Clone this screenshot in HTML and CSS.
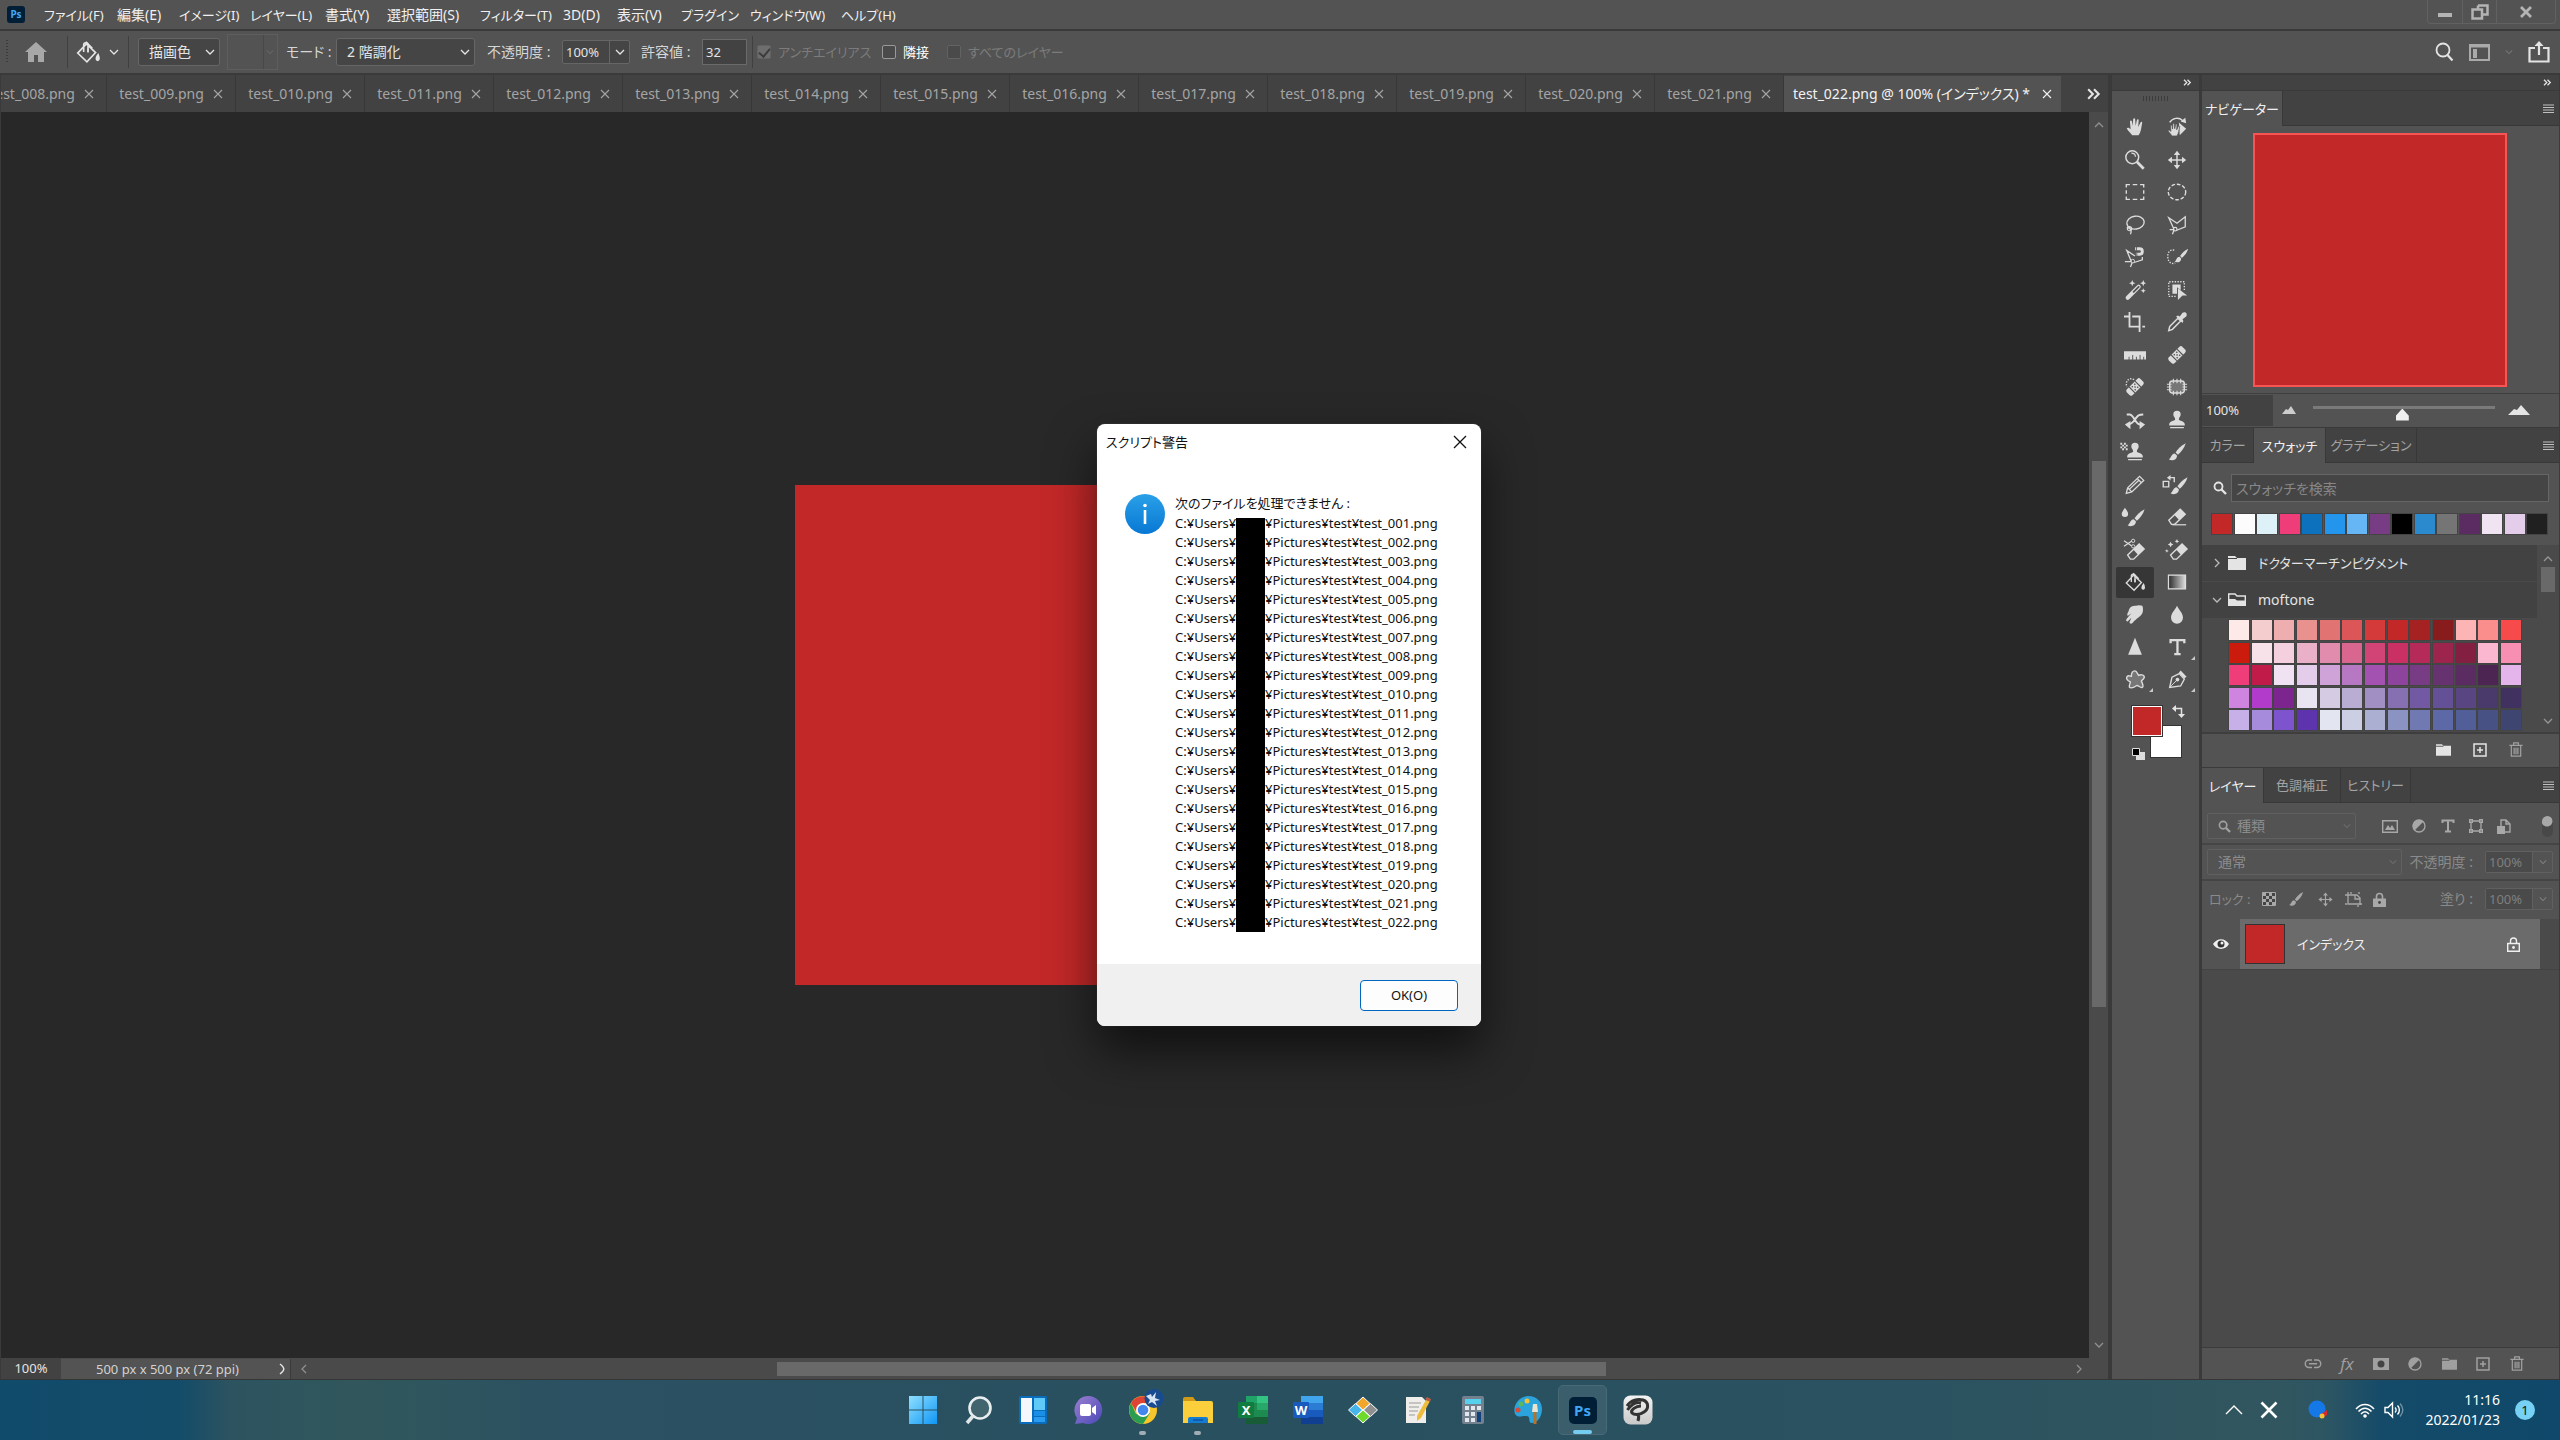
FILE: index.html
```html
<!DOCTYPE html>
<html lang="ja">
<head>
<meta charset="utf-8">
<title>test_022.png</title>
<link rel="stylesheet" href="styles.css">
</head>
<body>
<svg class="defs" aria-hidden="true">
  <symbol id="chev" viewBox="0 0 10 10"><path d="M1 3l4 4 4-4" fill="none" stroke="currentColor" stroke-width="1.3"/></symbol>
  <symbol id="x" viewBox="0 0 10 10"><path d="M1 1l8 8M9 1l-8 8" fill="none" stroke="currentColor" stroke-width="1.1"/></symbol>
  <symbol id="more" viewBox="0 0 12 10"><path d="M1 1l4 4-4 4M6 1l4 4-4 4" fill="none" stroke="currentColor" stroke-width="1.8"/></symbol>
  <symbol id="burger" viewBox="0 0 11 9"><path d="M0 1h11M0 3.5h11M0 6h11M0 8.5h11" stroke="currentColor" stroke-width="1"/></symbol>
  <symbol id="folder" viewBox="0 0 18 14"><path d="M0 0h7l2 2h9v12H0z" fill="currentColor"/><path d="M0 2.5h9" stroke="#444" stroke-width="1"/></symbol>
  <symbol id="plus" viewBox="0 0 14 14"><path d="M1 1h12v12H1zM7 4v6M4 7h6" fill="none" stroke="currentColor" stroke-width="1.5"/></symbol>
  <symbol id="trash" viewBox="0 0 14 16"><path d="M0 3.5h14M4.5 3V1h5v2M2 4v11h10V4M5 6v7M7 6v7M9 6v7" fill="none" stroke="currentColor" stroke-width="1.3"/></symbol>
  <symbol id="search" viewBox="0 0 14 14"><circle cx="5.5" cy="5.5" r="4" fill="none" stroke="currentColor" stroke-width="1.8"/><path d="M8.5 8.5l4.500 4.500" stroke="currentColor" stroke-width="2.400"/></symbol>
  <symbol id="half" viewBox="0 0 14 14"><circle cx="7" cy="7" r="6" fill="none" stroke="currentColor" stroke-width="1.3"/><path d="M11.500 2.500A6.300 6.300 0 0 0 2.500 11.500z" fill="currentColor"/></symbol>
  <symbol id="bucket" viewBox="0 0 24 24"><path d="M10.500 4.500l8.500 8-8 8.500-8.500-8zM8 12V5.500a2 2 0 0 1 4 0V12" fill="none" stroke="currentColor" stroke-width="1.5"/><path d="M10 2.500l6 6M12 9v3.500" stroke="currentColor" stroke-width="1.500"/><path d="M21.500 13c1.800 4 2 7-.5 7.500-3-.5-2.500-4 .5-7.500z" fill="currentColor"/></symbol>
  <symbol id="brush" viewBox="0 0 24 24"><path d="M21.500 2.500c-5 2.500-9 6.500-11 10l2.500 2.500c3.500-3 7-7 8.500-12.500z" fill="currentColor"/><path d="M9.500 13.500c-3.500 0-3.500 4.500-6.500 6.500 3 2 9 1 9-4.300z" fill="currentColor"/></symbol>
  <symbol id="move" viewBox="0 0 24 24"><path d="M12 5v14M5 12h14" stroke="currentColor" stroke-width="1.600"/><path d="M12 2l3.500 4.500h-7zM12 22l3.500-4.500h-7zM2 12l4.500-3.500v7zM22 12l-4.500-3.500v7z" fill="currentColor"/></symbol>
  <symbol id="hand" viewBox="0 0 24 24"><path d="M8 20c-2-3-4.500-5-5-6.500 1-1.500 3-.5 4.200 1L6.500 6c.2-1.400 1.800-1.400 2.200 0l.8 5L10 3.500c.3-1.500 2-1.500 2.200 0l.5 7 1.300-6c.5-1.300 2-1 2 .3L15.500 12l2.500-5c.7-1.200 2.200-.5 1.800.8-1 4-1 9.500-4 13.200H9z" fill="currentColor"/></symbol>
  <symbol id="band" viewBox="0 0 24 24"><g transform="rotate(-45 12 12)"><rect x="1.500" y="7.500" width="21" height="9" rx="2.500" fill="currentColor"/><path d="M7.500 7.500v9M16.500 7.500v9" stroke="#535353" stroke-width="1.200"/><path d="M9.300 9h1.500v1.500H9.300zM13.200 9h1.500v1.500h-1.500zM11.300 11.300h1.500v1.500h-1.500zM9.300 13.500h1.500V15H9.300zM13.200 13.500h1.500V15h-1.500z" fill="#535353"/></g></symbol>
  <symbol id="stamp" viewBox="0 0 24 24"><path d="M12 2a4 4 0 0 1 4 4c0 2.500-2 3-2 5.500 0 1.500 6 1.500 6.500 5V18h-17v-1.500c.5-3.500 6.500-3.500 6.500-5C10 9 8 8.500 8 6a4 4 0 0 1 4-4zM4.500 19.500h15V21h-15z" fill="currentColor"/></symbol>
  <symbol id="eraser" viewBox="0 0 24 24"><path d="M3 15.500L15.500 3.500l5.500 5.500L9.500 20H6z" fill="none" stroke="currentColor" stroke-width="1.500"/><path d="M9 9.500l6.500-6 5.500 5.500-6.500 6.500z" fill="currentColor"/></symbol>
  <symbol id="lasso3" viewBox="0 0 24 24"><path d="M8.500 16L3 4l9 6 9-7v11l-10 4M9 17l-5 0M9 17l-2 5" fill="none" stroke="currentColor" stroke-width="1.400"/><circle cx="10" cy="16.500" r="2" fill="none" stroke="currentColor" stroke-width="1.300"/></symbol>
</svg>

<div class="app">
  <header class="menubar">
    <span class="ps-badge">Ps</span>
    <nav class="menus">
      <a href="#" class="kana">ファイル(F)</a><a href="#">編集(E)</a><a href="#" class="kana">イメージ(I)</a><a href="#" class="kana">レイヤー(L)</a><a href="#">書式(Y)</a><a href="#">選択範囲(S)</a><a href="#" class="kana">フィルター(T)</a><a href="#">3D(D)</a><a href="#">表示(V)</a><a href="#" class="kana">プラグイン</a><a href="#" class="kana">ウィンドウ(W)</a><a href="#" class="kana">ヘルプ(H)</a>
    </nav>
    <div class="winctl">
      <button aria-label="最小化"><svg width="14" height="14"><path d="M0 8h14v4H0z" fill="currentColor"/></svg></button>
      <button aria-label="元に戻す"><svg width="18" height="16"><path d="M7 1.500h9.500v9H12M7 1.500V5M1.500 5.500H11v9H1.500z" fill="none" stroke="currentColor" stroke-width="2.500"/></svg></button>
      <button aria-label="閉じる"><svg width="14" height="12"><path d="M2 1l10 10M12 1L2 11" stroke="currentColor" stroke-width="2.800"/></svg></button>
    </div>
  </header>

  <div class="options">
    <span class="grip"></span>
    <button class="home" aria-label="ホーム"><svg width="22" height="20"><path d="M11 0l11 10h-3v10h-6v-7H9v7H3V10H0z" fill="currentColor"/></svg></button>
    <button class="toolpick" aria-label="塗りつぶしツール"><svg width="26" height="26"><use href="#bucket"/></svg><svg class="c" width="10" height="10"><use href="#chev"/></svg></button>
    <span class="field w-fill"><select aria-label="塗りつぶし"><option>描画色</option></select><svg width="10" height="10"><use href="#chev"/></svg></span>
    <span class="pattern"><svg width="8" height="8"><use href="#chev"/></svg></span>
    <label class="lbl l-mode" for="mode">モード :</label>
    <span class="field w-mode"><select id="mode"><option>2 階調化</option></select><svg width="10" height="10"><use href="#chev"/></svg></span>
    <label class="lbl l-op" for="op">不透明度 :</label>
    <span class="num"><input id="op" value="100%"><button aria-label="不透明度を選択"><svg width="10" height="10"><use href="#chev"/></svg></button></span>
    <label class="lbl l-tol" for="tol">許容値 :</label>
    <input class="tol" id="tol" value="32">
    <span class="checks">
      <label class="chk c1 off"><input type="checkbox" checked disabled>アンチエイリアス</label>
      <label class="chk c2"><input type="checkbox">隣接</label>
      <label class="chk c3 off"><input type="checkbox" disabled>すべてのレイヤー</label>
    </span>
    <span class="opt-right">
      <button aria-label="検索"><svg width="20" height="20" viewBox="0 0 20 20"><circle cx="9" cy="8" r="6.500" fill="none" stroke="currentColor" stroke-width="1.800"/><path d="M13.500 13l5 5.500" stroke="currentColor" stroke-width="2.200"/></svg></button>
      <button class="dim" aria-label="ワークスペース"><svg width="21" height="17"><path d="M1 1h19v15H1zM1 2.500h19" fill="none" stroke="currentColor" stroke-width="2"/><path d="M4 5h4v9H4z" fill="currentColor"/></svg></button>
      <svg class="faint" width="8" height="8"><use href="#chev"/></svg>
      <button aria-label="共有"><svg width="22" height="22"><path d="M7 7H1.500v13.500h19V7H15M11 14V3" fill="none" stroke="currentColor" stroke-width="2.200"/><path d="M11 0l4.500 5h-9z" fill="currentColor"/></svg></button>
    </span>
  </div>

  <main class="main">
    <section class="work">
      <div class="tabbar">
        <div class="tabs">
          <a href="#">test_008.png<svg width="10" height="10"><use href="#x"/></svg></a>
          <a href="#">test_009.png<svg width="10" height="10"><use href="#x"/></svg></a>
          <a href="#">test_010.png<svg width="10" height="10"><use href="#x"/></svg></a>
          <a href="#">test_011.png<svg width="10" height="10"><use href="#x"/></svg></a>
          <a href="#">test_012.png<svg width="10" height="10"><use href="#x"/></svg></a>
          <a href="#">test_013.png<svg width="10" height="10"><use href="#x"/></svg></a>
          <a href="#">test_014.png<svg width="10" height="10"><use href="#x"/></svg></a>
          <a href="#">test_015.png<svg width="10" height="10"><use href="#x"/></svg></a>
          <a href="#">test_016.png<svg width="10" height="10"><use href="#x"/></svg></a>
          <a href="#">test_017.png<svg width="10" height="10"><use href="#x"/></svg></a>
          <a href="#">test_018.png<svg width="10" height="10"><use href="#x"/></svg></a>
          <a href="#">test_019.png<svg width="10" height="10"><use href="#x"/></svg></a>
          <a href="#">test_020.png<svg width="10" height="10"><use href="#x"/></svg></a>
          <a href="#">test_021.png<svg width="10" height="10"><use href="#x"/></svg></a>
          <a href="#" class="on">test_022.png @ 100% (インデックス) *<svg width="10" height="10"><use href="#x"/></svg></a>
        </div>
        <button class="tabmore" aria-label="他のタブ"><svg width="14" height="12"><use href="#more"/></svg></button>
      </div>
      <div class="stage">
        <div class="canvas"><div class="doc"></div></div>
        <div class="vbar"><svg class="up" width="10" height="10"><use href="#chev"/></svg><span class="above"></span><span class="thumb"></span><span class="below"></span><svg width="10" height="10"><use href="#chev"/></svg></div>
      </div>
      <div class="status">
        <span class="zoomval">100%</span>
        <span class="info">500 px x 500 px (72 ppi)</span>
        <button class="next" aria-label="情報"><svg width="6" height="12"><path d="M1 1c5 4 5 6 0 10" fill="none" stroke="currentColor" stroke-width="1.500"/></svg></button>
        <div class="hbar"><svg class="lf" width="10" height="10"><use href="#chev"/></svg><span class="before"></span><span class="thumb"></span><span class="after"></span><svg class="rt" width="10" height="10"><use href="#chev"/></svg></div>
      </div>
    </section>

    <aside class="tools">
      <div class="dockhead"><svg width="9" height="7"><use href="#more"/></svg></div>
      <div class="toolbody">
        <span class="hgrip"></span>
        <div class="toolgrid">
          <button aria-label="手のひら"><svg viewBox="0 0 24 24"><use href="#hand"/></svg></button>
          <button aria-label="回転ビュー"><svg viewBox="0 0 24 24"><path d="M4 7c3-5 10-6 14-2" fill="none" stroke="currentColor" stroke-width="1.500"/><path d="M16 6l5-4 1 6zM14 7l8 7-7 7z" fill="currentColor"/><g transform="translate(0 6) scale(.75)" stroke="#535353" stroke-width="1"><use href="#hand"/></g></svg></button>
          <button aria-label="ズーム"><svg viewBox="0 0 24 24"><circle cx="9" cy="9" r="7" fill="none" stroke="currentColor" stroke-width="1.600"/><path d="M8 4.500c2.500 0 4.500 1.500 4.500 4" fill="none" stroke="currentColor" stroke-width="1.300"/><path d="M14 14l7.500 7.500" stroke="currentColor" stroke-width="3"/></svg></button>
          <button aria-label="移動"><svg viewBox="0 0 24 24"><use href="#move"/></svg></button>
          <button aria-label="長方形選択"><svg viewBox="0 0 24 24"><path d="M2.500 7V4h4M9.500 4h5M17.500 4h4v3M21.500 10v4M21.500 17v3h-4M14.500 20h-5M6.500 20h-4v-3M2.500 14v-4" fill="none" stroke="currentColor" stroke-width="1.500"/></svg></button>
          <button aria-label="楕円形選択"><svg viewBox="0 0 24 24"><ellipse cx="12" cy="12" rx="9.500" ry="8.500" fill="none" stroke="currentColor" stroke-width="1.500" stroke-dasharray="4 2"/></svg></button>
          <button aria-label="なげなわ"><svg viewBox="0 0 24 24"><ellipse cx="12.500" cy="9.500" rx="9.500" ry="7" transform="rotate(-8 12 9)" fill="none" stroke="currentColor" stroke-width="1.500"/><circle cx="6" cy="16" r="2.300" fill="none" stroke="currentColor" stroke-width="1.300"/><path d="M3 15c4 0 6 3 4 7" fill="none" stroke="currentColor" stroke-width="1.300"/></svg></button>
          <button aria-label="多角形選択"><svg viewBox="0 0 24 24"><use href="#lasso3"/></svg></button>
          <button aria-label="マグネット選択"><svg viewBox="0 0 24 24"><path d="M8 17L3 5l9 6M20 12v3l-9 3M8 17H1M9 18l-2 5" fill="none" stroke="currentColor" stroke-width="1.400"/><circle cx="9.500" cy="16.500" r="2" fill="none" stroke="currentColor"/><path d="M12 3h5c4 0 4 6 0 6h-4" fill="none" stroke="currentColor" stroke-width="3.200"/><path d="M13.500 1v4M14 7v4" stroke="#535353"/></svg></button>
          <button aria-label="クイック選択"><svg viewBox="0 0 24 24"><path d="M9 4.500c-5-1-7.500 3-7 8s4 8 8 6" fill="none" stroke="currentColor" stroke-width="1.500" stroke-dasharray="1.500 1.500"/><g transform="translate(7 1) scale(.8)"><use href="#brush"/></g></svg></button>
          <button aria-label="自動選択"><svg viewBox="0 0 24 24"><path d="M4 20.500L16 8.500" stroke="currentColor" stroke-width="4.500" stroke-linecap="round"/><path d="M10.500 14L16 8.500" stroke="#535353" stroke-width="2" stroke-linecap="round"/><path d="M9 1l1 2.500 2.500 1-2.500 1L9 8 8 5.500l-2.500-1L8 3.500zM21 1l1 2.500 2 1-2 1L21 8l-1-2.500-2.500-1 2.500-1zM21 10l.8 2 2 .8-2 .8-.8 2-.8-2-2-.8 2-.8z" fill="currentColor"/></svg></button>
          <button aria-label="オブジェクト選択"><svg viewBox="0 0 24 24"><path d="M20 12V3H3v16h9" fill="none" stroke="currentColor" stroke-width="1.500" stroke-dasharray="1.500 1.500"/><path d="M7 6h9v6l-4-3v7H7zM13 10l10 8h-5l-5 5z" fill="currentColor"/></svg></button>
          <button aria-label="切り抜き"><svg viewBox="0 0 24 24"><path d="M0 6h5M6 1v16h11M20 17h3M9 6h8v17" fill="none" stroke="currentColor" stroke-width="2"/></svg></button>
          <button aria-label="スポイト"><svg viewBox="0 0 24 24"><path d="M4 17l9-9 3 3-9 9-4 1.500z" fill="none" stroke="currentColor" stroke-width="1.600"/><path d="M11 6l2-1 2 1 3-4c3-2 6 1 4 4l-4 3 1 2-1 2z" fill="currentColor"/></svg></button>
          <button aria-label="ものさし"><svg viewBox="0 0 24 24"><path d="M0 8h24v9h-2v-3h-1v3h-3v-5h-1v5h-3v-3h-1v3h-3v-5H9v5H6v-3H5v3H0z" fill="currentColor"/></svg></button>
          <button aria-label="修復ブラシ"><svg viewBox="0 0 24 24"><use href="#band"/></svg></button>
          <button aria-label="スポット修復"><svg viewBox="0 0 24 24"><path d="M11 4C6 1 1 5 3 12" fill="none" stroke="currentColor" stroke-width="1.500" stroke-dasharray="1.500 1.500"/><use href="#band"/></svg></button>
          <button aria-label="パッチ"><svg viewBox="0 0 24 24"><rect x="4" y="5.500" width="16" height="13" rx="3" fill="#777" stroke="currentColor" stroke-width="1.500"/><path d="M8 3v5M12 3v5M16 3v5M8 16v5M12 16v5M16 16v5M1 9h5M1 12h5M1 15h5M18 9h5M18 12h5M18 15h5" stroke="currentColor" stroke-width="1.200"/></svg></button>
          <button aria-label="コンテンツに応じた移動"><svg viewBox="0 0 24 24"><path d="M3 6h3c5 0 6 11 12 11M3 17c6 0 8-4 10-7s3-4 8-4" fill="none" stroke="currentColor" stroke-width="2.200"/><path d="M17 13l6 4-6 5zM7 13l-6 4 6 5z" fill="currentColor"/></svg></button>
          <button aria-label="スタンプ"><svg viewBox="0 0 24 24"><use href="#stamp"/></svg></button>
          <button aria-label="パターンスタンプ"><svg viewBox="0 0 24 24"><use href="#stamp"/><path d="M-4 2h2v2h-2zM0 2h2v2H0zM-2 4h2v2h-2zM2 4h2v2H2zM-4 6h2v2h-2zM0 6h2v2H0zM-2 8h2v2h-2zM2 8h2v2H2z" fill="currentColor"/></svg></button>
          <button aria-label="ブラシ"><svg viewBox="0 0 24 24"><use href="#brush"/></svg></button>
          <button aria-label="鉛筆"><svg viewBox="0 0 24 24"><path d="M2.500 21l1.500-6L17 2.500 21.500 7 8.500 19.500zM4 15l4.500 4.500M14.500 5l4.500 4.500M6 16.500L16.500 6.500" fill="none" stroke="currentColor" stroke-width="1.400"/></svg></button>
          <button aria-label="ヒストリーブラシ"><svg viewBox="0 0 24 24"><g transform="translate(2 1)"><use href="#brush"/></g><path d="M-3 8h6v6h-6zM4 4h5v5" fill="none" stroke="currentColor" stroke-width="1.500"/><path d="M5 1v6L1 4z" fill="currentColor"/></svg></button>
          <button aria-label="混合ブラシ"><svg viewBox="0 0 24 24"><g transform="translate(1 1)"><use href="#brush"/></g><path d="M1 2c2.500 3.500 3.500 5 3.500 6.500a3.500 3.500 0 0 1-7 0C-2.500 7-1 5 1 2z" fill="currentColor"/></svg></button>
          <button aria-label="消しゴム"><svg viewBox="0 0 24 24"><use href="#eraser"/><path d="M7 20.500h15" stroke="currentColor" stroke-width="1.300"/></svg></button>
          <button aria-label="背景消しゴム"><svg viewBox="0 0 24 24"><g transform="translate(1 2)"><use href="#eraser"/></g><path d="M0 2l9 6M0 8l9-6" stroke="currentColor" stroke-width="1.300"/><circle cx="10" cy="2" r="1.800" fill="#535353" stroke="currentColor"/><circle cx="10" cy="8" r="1.800" fill="#535353" stroke="currentColor"/></svg></button>
          <button aria-label="マジック消しゴム"><svg viewBox="0 0 24 24"><g transform="translate(2 2)"><use href="#eraser"/></g><path d="M5 3l1 2 2 1-2 1-1 2-1-2-2-1 2-1zM12 0l.8 1.800 1.800.8-1.800.8L12 5l-.8-1.800-1.800-.8 1.800-.8zM1 11l.6 1.500 1.500.6-1.500.6L1 15l-.6-1.500-1.500-.6 1.500-.6z" fill="currentColor"/></svg></button>
          <button class="sel" aria-label="塗りつぶし"><svg viewBox="0 0 24 24"><use href="#bucket"/></svg></button>
          <button aria-label="グラデーション"><svg viewBox="0 0 24 24"><defs><linearGradient id="gr"><stop stop-color="#2a2a2a"/><stop offset="1" stop-color="#ddd"/></linearGradient></defs><rect x="2.700" y="4.500" width="18.600" height="15" fill="url(#gr)" stroke="currentColor" stroke-width="1.400"/></svg></button>
          <button aria-label="指先"><svg viewBox="0 0 24 24"><path d="M5 8c1-5 4-6 8-6 2-1 5-1 7 0 1 2 1 6 0 8-2 4-7 6-10 10-1 2-4 2-4 0l2-5-4 4c-2 0-2-2-1-3l5-6-4 3c-1-2 0-3 1-5z" fill="currentColor"/></svg></button>
          <button aria-label="ぼかし"><svg viewBox="0 0 24 24"><path d="M12 2c3 6 6.500 8 6.500 13a6.500 6.500 0 0 1-13 0C5.500 10 9 8 12 2z" fill="currentColor"/></svg></button>
          <button aria-label="シャープ"><svg viewBox="0 0 24 24"><path d="M12 2l7.500 18.500h-15z" fill="currentColor"/></svg></button>
          <button class="sub" aria-label="文字"><svg viewBox="0 0 24 24"><path d="M5 8V4.500h15V8M12.500 4.500v15M9 19.700h7" fill="none" stroke="currentColor" stroke-width="2.500"/></svg></button>
          <button class="sub" aria-label="シェイプ"><svg viewBox="0 0 24 24"><path d="M8 8c0-5 2-6 4-6s3 4 4 5c2-1 5-1 6 1s-2 4-3 5c1 3 3 6 1 7s-4-2-6-2c-3 2-6 4-8 2-1-2 1-4 1-6-2-1-5-2-4-5s4-1 5-1z" fill="#777" stroke="currentColor" stroke-width="1.500"/></svg></button>
          <button class="sub" aria-label="ペン"><svg viewBox="0 0 24 24"><path d="M4 20l2.500-11 8-4 5.500 6-4 7.500z" fill="none" stroke="currentColor" stroke-width="1.500"/><path d="M4 20l8-8" stroke="currentColor"/><circle cx="12.500" cy="11.500" r="2" fill="currentColor"/><path d="M14 4l2-2.500 6.500 7L20 10z" fill="currentColor"/></svg></button>
        </div>
        <div class="colors">
          <span class="bgc"></span><span class="fgc"></span>
          <svg class="swap" width="13" height="13"><path d="M2 3.500h7.500V11" fill="none" stroke="currentColor" stroke-width="1.500"/><path d="M0 3.500L4 0v7zM9.500 13L6 9h7z" fill="currentColor"/></svg>
          <svg class="dflt" width="13" height="12"><path d="M4 4h9v8H4z" fill="#ddd"/><path d="M.5.5h7v7h-7z" fill="#000" stroke="#ddd"/></svg>
        </div>
      </div>
    </aside>

    <aside class="dock">
      <div class="dockhead"><svg width="9" height="7"><use href="#more"/></svg></div>

      <section class="panel nav">
        <div class="ptabs"><a href="#" class="on t80">ナビゲーター</a><svg class="burger" width="11" height="9"><use href="#burger"/></svg></div>
        <div class="preview"><div class="thumbimg"></div></div>
        <div class="zoomrow">
          <input class="zin" aria-label="ズーム率" value="100%">
          <svg class="m1" width="14" height="8"><path d="M0 8l4-5 2 1 3-4 5 8z" fill="currentColor"/></svg>
          <input type="range" aria-label="ズーム" min="0" max="100" value="49">
          <svg class="m2" width="22" height="10"><path d="M0 10l6-6 3 1 4-5 9 10z" fill="currentColor"/></svg>
        </div>
      </section>

      <section class="panel swatches">
        <div class="ptabs"><a href="#" class="t52">カラー</a><a href="#" class="on t71">スウォッチ</a><a href="#" class="t91">グラデーション</a><svg class="burger" width="11" height="9"><use href="#burger"/></svg></div>
        <div class="ssearch"><svg width="14" height="14"><use href="#search"/></svg><input aria-label="スウォッチを検索" placeholder="スウォッチを検索"></div>
        <div class="recent">
          <i style="background:#c22828"></i><i style="background:#fcfcfc"></i><i style="background:#dff1f8"></i><i style="background:#ee3d78"></i><i style="background:#0d71be"></i><i style="background:#2395ec"></i><i style="background:#66b5f4"></i><i style="background:#773c84"></i><i style="background:#000"></i><i style="background:#2b89cd"></i><i style="background:#757575"></i><i style="background:#5b2c62"></i><i style="background:#f0e4f3"></i><i style="background:#e4cdea"></i><i style="background:#202020"></i>
        </div>
        <div class="slist">
          <div class="sgroups">
            <div class="grp"><svg class="arr r" width="10" height="10"><use href="#chev"/></svg><svg width="18" height="14"><use href="#folder"/></svg><span>ドクターマーチンピグメント</span></div>
            <div class="grp"><svg class="arr" width="10" height="10"><use href="#chev"/></svg><svg width="18" height="14"><path d="M.7 12V1H7l2 2h8.300v9z" fill="none" stroke="currentColor" stroke-width="1.400"/><path d="M1 6h6l2 1.500h9V13H0z" fill="currentColor"/></svg><span class="lat">moftone</span></div>
            <div class="sgrid">
              <i style="background:#fce9e8"></i><i style="background:#f4cecf"></i><i style="background:#eeadae"></i><i style="background:#e8918f"></i><i style="background:#e17473"></i><i style="background:#dc5658"></i><i style="background:#d33a39"></i><i style="background:#c22828"></i><i style="background:#a52223"></i><i style="background:#881b1c"></i><i style="background:#fcb4b5"></i><i style="background:#fa8e8c"></i><i style="background:#f74b4b"></i>
              <i style="background:#cb1b0c"></i><i style="background:#f8e2ea"></i><i style="background:#f4cfdd"></i><i style="background:#eab0c7"></i><i style="background:#e18cac"></i><i style="background:#d9668f"></i><i style="background:#d24475"></i><i style="background:#cb3064"></i><i style="background:#b62a59"></i><i style="background:#9d244c"></i><i style="background:#831f40"></i><i style="background:#fab7cf"></i><i style="background:#f68fb2"></i>
              <i style="background:#ee3d78"></i><i style="background:#c01b49"></i><i style="background:#f0e2f3"></i><i style="background:#e4cdea"></i><i style="background:#cfa3d7"></i><i style="background:#b677c3"></i><i style="background:#a352b2"></i><i style="background:#8e449c"></i><i style="background:#773c84"></i><i style="background:#663270"></i><i style="background:#5b2c62"></i><i style="background:#4d2553"></i><i style="background:#e4b5eb"></i>
              <i style="background:#cf84df"></i><i style="background:#b23bcc"></i><i style="background:#7d258e"></i><i style="background:#e8e4f2"></i><i style="background:#d5cce4"></i><i style="background:#b9add3"></i><i style="background:#a18fc3"></i><i style="background:#8670b1"></i><i style="background:#7358a4"></i><i style="background:#645096"></i><i style="background:#594581"></i><i style="background:#4a3a6b"></i><i style="background:#403160"></i>
              <i style="background:#c6b0e7"></i><i style="background:#a68adc"></i><i style="background:#7d54cd"></i><i style="background:#5d34ad"></i><i style="background:#e3e5f0"></i><i style="background:#cccfe3"></i><i style="background:#abb0d3"></i><i style="background:#8b93c2"></i><i style="background:#7079b1"></i><i style="background:#5d68a7"></i><i style="background:#515e98"></i><i style="background:#475183"></i><i style="background:#3d4570"></i>
            </div>
          </div>
          <div class="sbar"><svg class="up" width="10" height="10"><use href="#chev"/></svg><span class="thumb"></span><svg class="dn" width="10" height="10"><use href="#chev"/></svg></div>
        </div>
        <div class="sfoot"><svg width="15" height="12"><use href="#folder"/></svg><svg width="14" height="14"><use href="#plus"/></svg><svg class="mut" width="14" height="15"><use href="#trash"/></svg></div>
      </section>

      <section class="panel layers">
        <div class="ptabs"><a href="#" class="on t62">レイヤー</a><a href="#" class="t76">色調補正</a><a href="#" class="t70">ヒストリー</a><svg class="burger" width="11" height="9"><use href="#burger"/></svg></div>
        <div class="lrow filt">
          <span class="dd kind"><svg class="mag" width="13" height="13"><use href="#search"/></svg><select aria-label="フィルターの種類" disabled><option>種類</option></select><svg width="8" height="8"><use href="#chev"/></svg></span>
          <span class="ficons">
            <svg width="16" height="13"><path d="M.7.7h14.600v11.600H.7z" fill="none" stroke="currentColor" stroke-width="1.400"/><path d="M3 10l3-5 2 3 2-3 3 5z" fill="currentColor"/></svg>
            <svg width="14" height="14"><use href="#half"/></svg>
            <svg width="14" height="14"><path d="M1.500 4V1.500h11V4M7 1v11.500M4 12.500h6" fill="none" stroke="currentColor" stroke-width="2"/></svg>
            <svg width="14" height="14"><path d="M2 2h10v10H2z" fill="none" stroke="currentColor" stroke-width="1.300"/><path d="M0 0h4v4H0zM10 0h4v4h-4zM0 10h4v4H0zM10 10h4v4h-4z" fill="currentColor"/><path d="M1.500 1.500h1v1h-1zM11.500 1.500h1v1h-1zM1.500 11.500h1v1h-1zM11.500 11.500h1v1h-1z" fill="#444"/></svg>
            <svg width="14" height="15"><path d="M4 7V1h5l4 4v8H8M9 1v4h4" fill="none" stroke="currentColor" stroke-width="1.400"/><path d="M0 7h8v8H0z" fill="currentColor"/></svg>
          </span>
          <span class="tog"></span>
        </div>
        <div class="lrow">
          <span class="dd blend"><select aria-label="描画モード" disabled><option>通常</option></select><svg width="8" height="8"><use href="#chev"/></svg></span>
          <label for="lop">不透明度 :</label>
          <span class="num off"><input id="lop" value="100%" disabled><button disabled aria-label="不透明度"><svg width="8" height="8"><use href="#chev"/></svg></button></span>
        </div>
        <div class="lrow lock">
          <span class="locklbl">ロック :</span>
          <span class="licons">
            <svg width="14" height="14"><path d="M.5.500h13v13H.500z" fill="#444" stroke="currentColor"/><path d="M1 1h3v3H1zM7 1h3v3H7zM4 4h3v3H4zM10 4h3v3h-3zM1 7h3v3H1zM7 7h3v3H7zM4 10h3v3H4zM10 10h3v3h-3z" fill="currentColor"/></svg>
            <svg width="18" height="18" viewBox="0 0 24 24"><use href="#brush"/></svg>
            <svg width="17" height="17" viewBox="0 0 24 24"><use href="#move"/></svg>
            <svg width="17" height="15"><path d="M0 3h12l3 3v7M3 0v12h14M6 0v2M14 0v2M0 12h2M13 15v-2M10 3v4h5" fill="none" stroke="currentColor" stroke-width="1.300"/></svg>
            <svg width="13" height="15"><path d="M3.500 7V4.500a3 3 0 0 1 6 0V7" fill="none" stroke="currentColor" stroke-width="1.600"/><path d="M0 6.500h13V15H0z" fill="currentColor"/><circle cx="6.500" cy="10.500" r="1.400" fill="#444"/></svg>
          </span>
          <label for="lfill">塗り :</label>
          <span class="num off"><input id="lfill" value="100%" disabled><button disabled aria-label="塗り"><svg width="8" height="8"><use href="#chev"/></svg></button></span>
        </div>
        <div class="llist">
          <div class="layer">
            <span class="eye"><svg width="16" height="10"><path d="M0 5c4-6.500 12-6.500 16 0-4 6.500-12 6.500-16 0z" fill="currentColor"/><circle cx="8" cy="5" r="3.500" fill="#333"/><circle cx="9" cy="4" r="1.500" fill="currentColor"/></svg></span>
            <div class="lsel"><span class="lthumb"></span><span class="lname">インデックス</span><svg width="13" height="15"><path d="M3.500 7V4a3 3 0 0 1 6 0v3M.7 6.500h11.600v7.800H.7z" fill="none" stroke="currentColor" stroke-width="1.400"/><circle cx="6.500" cy="10.500" r="1.400" fill="currentColor"/></svg></div>
          </div>
        </div>
        <div class="lfoot">
          <svg width="18" height="10"><path d="M8 8.500H5a3.700 3.700 0 0 1 0-7.500h3M10 1h3a3.700 3.700 0 0 1 0 7.500h-3M5 4.800h8" fill="none" stroke="currentColor" stroke-width="1.400"/></svg>
          <span class="fx">fx</span>
          <svg width="16" height="12"><path d="M0 0h16v12H0z" fill="currentColor"/><circle cx="8" cy="6" r="3.500" fill="#444"/></svg>
          <svg width="14" height="14"><use href="#half"/></svg>
          <svg width="15" height="12"><use href="#folder"/></svg>
          <svg width="14" height="14"><use href="#plus"/></svg>
          <svg width="14" height="15"><use href="#trash"/></svg>
        </div>
      </section>
    </aside>
  </main>

  <footer class="taskbar">
    <span class="tray-space"></span>
    <nav class="apps">
      <button aria-label="スタート"><svg width="30" height="30"><defs><linearGradient id="w" x2="1" y2="1"><stop stop-color="#8fe0ff"/><stop offset="1" stop-color="#0f96f5"/></linearGradient></defs><path d="M1 1h13.500v13.500H1zM15.500 1H29v13.500H15.500zM1 15.500h13.500V29H1zM15.500 15.500H29V29H15.500z" fill="url(#w)"/></svg></button>
      <button aria-label="検索"><svg width="28" height="30"><circle cx="16" cy="13" r="10.500" fill="#41646f" stroke="#e8eef0" stroke-width="2.600"/><path d="M9 21l-6 7" stroke="#dfe6e8" stroke-width="3.500"/></svg></button>
      <button aria-label="ウィジェット"><svg width="30" height="30"><rect x="1" y="1" width="28" height="28" rx="2" fill="#0a6cbd"/><path d="M3 3h11v24H3z" fill="#f4f7fb"/><path d="M16 3h11v12H16z" fill="#5fc9f8"/><path d="M16 16h11v5H16z" fill="#1b8fe6"/><path d="M16 22h11v5H16z" fill="#2a9cf0"/></svg></button>
      <button aria-label="チャット"><svg width="30" height="30"><defs><linearGradient id="ch" x2="1" y2="1"><stop stop-color="#9b7fd0"/><stop offset="1" stop-color="#4a49b8"/></linearGradient></defs><path d="M15 1a14 14 0 1 1-5 27l-8 1 2-6A14 14 0 0 1 15 1z" fill="url(#ch)"/><rect x="7" y="9" width="11" height="12" rx="2" fill="#fff"/><path d="M19 13l4-3v10l-4-3z" fill="#fff"/></svg></button>
      <button class="run" aria-label="Chrome"><svg width="30" height="30" viewBox="0 6 30 30"><circle cx="15" cy="21" r="14" fill="#f6c62a"/><path d="M3 14A14 14 0 0 1 27 14H15l-6 10z" fill="#df4334"/><path d="M3 14a14 14 0 0 0 12 21l7-11-14 1z" fill="#2b9d50"/><circle cx="15" cy="21" r="7" fill="#fff"/><circle cx="15" cy="21" r="5.300" fill="#4286ee"/><circle cx="26" cy="9.500" r="9.500" fill="#184a90"/><path d="M18 7l5-2 1 3 4-5-1 6 5 2-5 1 2 5-5-4-4 2 2-4z" fill="#d5e3f3"/></svg></button>
      <button class="run" aria-label="エクスプローラー"><svg width="32" height="28"><path d="M1 3a2 2 0 0 1 2-2h8l3 4h-13z" fill="#d09a16"/><path d="M1 5h28a2 2 0 0 1 2 2v20H1z" fill="#fbcf3c"/><path d="M6 27v-4a2 2 0 0 1 2-2h16a2 2 0 0 1 2 2v4z" fill="#147cd2"/><path d="M11 24h10" stroke="#0b559c" stroke-width="1.500"/></svg></button>
      <button aria-label="Excel"><svg width="30" height="28"><path d="M8 0h22v28H8z" fill="#1d8a50"/><path d="M8 0h11v7H8z" fill="#20a366"/><path d="M19 0h11v7H19z" fill="#33c481"/><path d="M19 7h11v7H19z" fill="#27a868"/><path d="M8 21h22v7H8z" fill="#185c37"/><rect y="6" width="16" height="16" rx="1" fill="#107c41"/><text x="8" y="19" class="glyph">X</text></svg></button>
      <button aria-label="Word"><svg width="30" height="28"><path d="M8 0h22v7H8z" fill="#41a5ee"/><path d="M8 7h22v7H8z" fill="#2b7cd3"/><path d="M8 14h22v7H8z" fill="#185abd"/><path d="M8 21h22v7H8z" fill="#103f91"/><rect y="6" width="16" height="16" rx="1" fill="#185abd"/><text x="8" y="19" class="glyph">W</text></svg></button>
      <button aria-label="ランチャー"><svg width="30" height="26"><path d="M15 0l7 6.500-7 6.500-7-6.500z" fill="#f2a72c" stroke="#fff"/><path d="M7.500 6.500l7 6.500-7 6.500-7-6.500z" fill="#45b5ea" stroke="#fff"/><path d="M22.500 6.500l7 6.500-7 6.500-7-6.500z" fill="#8f8f8f" stroke="#fff"/><path d="M15 13l7 6.500-7 6.500-7-6.500z" fill="#6edb2c" stroke="#fff"/></svg></button>
      <button aria-label="メモ"><svg width="26" height="28"><path d="M1 1h16l4 4v22H1z" fill="#f0eeea"/><path d="M4 7h12M4 11h10M4 15h9M4 19h6" stroke="#999" stroke-width="1"/><path d="M21 4l4 1-9 17-4 3v-5z" fill="#eebb3b"/><path d="M20 3l2-2 4 2-1 3z" fill="#b95a45"/></svg></button>
      <button aria-label="電卓"><svg width="24" height="30"><rect x="1" y="1" width="22" height="28" rx="2" fill="#73808e"/><path d="M4 4h16v5H4z" fill="#56d0ed"/><path d="M4 11h4v4H4zM10 11h4v4h-4zM16 11h4v4h-4zM4 17h4v4H4zM10 17h4v4h-4zM4 23h4v4H4zM10 23h4v4h-4z" fill="#e1e7ed"/><path d="M16 17h4v10h-4z" fill="#12427b"/></svg></button>
      <button aria-label="ペイント"><svg width="30" height="30"><path d="M15 1c9 0 14 6 14 13 0 8-5 14-10 14s0-7-6-7-8 2-11-2C-1 11 6 1 15 1z" fill="#2ba3dd"/><circle cx="14" cy="6" r="2.500" fill="#f4c333"/><circle cx="8" cy="9" r="2.500" fill="#5cb85c"/><circle cx="5" cy="15" r="2.500" fill="#d84b35"/><path d="M20 9h4l1 8h-6z" fill="#ece3cf"/><path d="M20.500 17h3v12h-3z" fill="#b97124"/></svg></button>
      <button class="act" aria-label="Photoshop"><span class="ps-big">Ps</span></button>
      <button aria-label="CLIP STUDIO"><svg width="30" height="30"><defs><linearGradient id="cs" x2="0" y2="1"><stop stop-color="#f4f4f4"/><stop offset="1" stop-color="#c9c9c9"/></linearGradient></defs><rect x=".5" y=".5" width="29" height="29" rx="7" fill="url(#cs)"/><path d="M4 11C8 5 15 3.500 20 5c6 2 6 9 1 12-5 3.500-10 3-12 1-2-3 4-7 9-7M4.500 15C8 10 13 6.500 18 8M15 19c1 2 1 4 0 7" fill="none" stroke="#333" stroke-width="3"/></svg></button>
    </nav>
    <div class="tray">
      <svg class="up" width="18" height="18" viewBox="0 0 18 18"><path d="M1 5l8 8 8-8" fill="none" stroke="currentColor" stroke-width="1.400"/></svg>
      <svg class="tx" width="18" height="18"><path d="M1.500 1.500l15 15M16.500 1.500l-15 15" stroke="currentColor" stroke-width="2.600"/></svg>
      <svg class="tb" width="20" height="20"><circle cx="9" cy="9" r="8.500" fill="#1478e6"/><path d="M13 14l6-4v5l-5 3z" fill="#d92a2a"/><circle cx="14" cy="16" r="2.500" fill="#f3c23c"/></svg>
      <svg class="tw" width="20" height="15"><path d="M1 6c5-6 13-6 18 0M3.500 8.500c4-4.500 9-4.500 13 0M6 11c2.500-3 5.500-3 8 0" fill="none" stroke="currentColor" stroke-width="1.500"/><circle cx="10" cy="13" r="1.800" fill="currentColor"/></svg>
      <svg class="ts" width="20" height="16"><path d="M1 5.500h3L8.500 1v14L4 10.500H1z" fill="none" stroke="currentColor" stroke-width="1.400"/><path d="M11 5.500c1.500 1.500 1.500 3.500 0 5M13.500 3.500c2.500 2.500 2.500 6.500 0 9" fill="none" stroke="currentColor" stroke-width="1.400"/><path d="M16 1.500c3.500 4 3.500 9 0 13" fill="none" stroke="#7592a0" stroke-width="1.300"/></svg>
      <div class="clock"><span>11:16</span><span>2022/01/23</span></div>
      <span class="badge">1</span>
    </div>
  </footer>
</div>

<section class="dialog" role="dialog" aria-label="スクリプト警告">
  <header><span>スクリプト警告</span><button aria-label="閉じる"><svg width="14" height="14"><path d="M1 1l12 12M13 1L1 13" stroke="#111" stroke-width="1.300"/></svg></button></header>
  <div class="dbody">
    <svg class="dicon" width="40" height="40"><defs><linearGradient id="inf" x2="0" y2="1"><stop stop-color="#2aa0e8"/><stop offset="1" stop-color="#0878d4"/></linearGradient></defs><circle cx="20" cy="20" r="20" fill="url(#inf)"/><path d="M20 16v14" stroke="#fff" stroke-width="2.600"/><circle cx="20" cy="11.500" r="1.800" fill="#fff"/></svg>
    <div class="dtext">
      <p>次のファイルを処理できません :</p>
      <ul>
        <li><span>C:¥Users¥</span>¥Pictures¥test¥test_001.png</li>
        <li><span>C:¥Users¥</span>¥Pictures¥test¥test_002.png</li>
        <li><span>C:¥Users¥</span>¥Pictures¥test¥test_003.png</li>
        <li><span>C:¥Users¥</span>¥Pictures¥test¥test_004.png</li>
        <li><span>C:¥Users¥</span>¥Pictures¥test¥test_005.png</li>
        <li><span>C:¥Users¥</span>¥Pictures¥test¥test_006.png</li>
        <li><span>C:¥Users¥</span>¥Pictures¥test¥test_007.png</li>
        <li><span>C:¥Users¥</span>¥Pictures¥test¥test_008.png</li>
        <li><span>C:¥Users¥</span>¥Pictures¥test¥test_009.png</li>
        <li><span>C:¥Users¥</span>¥Pictures¥test¥test_010.png</li>
        <li><span>C:¥Users¥</span>¥Pictures¥test¥test_011.png</li>
        <li><span>C:¥Users¥</span>¥Pictures¥test¥test_012.png</li>
        <li><span>C:¥Users¥</span>¥Pictures¥test¥test_013.png</li>
        <li><span>C:¥Users¥</span>¥Pictures¥test¥test_014.png</li>
        <li><span>C:¥Users¥</span>¥Pictures¥test¥test_015.png</li>
        <li><span>C:¥Users¥</span>¥Pictures¥test¥test_016.png</li>
        <li><span>C:¥Users¥</span>¥Pictures¥test¥test_017.png</li>
        <li><span>C:¥Users¥</span>¥Pictures¥test¥test_018.png</li>
        <li><span>C:¥Users¥</span>¥Pictures¥test¥test_019.png</li>
        <li><span>C:¥Users¥</span>¥Pictures¥test¥test_020.png</li>
        <li><span>C:¥Users¥</span>¥Pictures¥test¥test_021.png</li>
        <li><span>C:¥Users¥</span>¥Pictures¥test¥test_022.png</li>
      </ul>
      <span class="mask"></span>
    </div>
  </div>
  <footer><button>OK(O)</button></footer>
</section>
</body>
</html>
```
FILE: styles.css
```css
* { box-sizing: border-box; }
body { margin: 0; background: #282828; color: #e4e4e4; font: 14px/20px "Noto Sans", "Noto Sans CJK JP", sans-serif; font-feature-settings: "palt"; white-space: nowrap; overflow: hidden; }
a { color: inherit; text-decoration: none; }
button { background: none; border: 0; padding: 0; margin: 0; color: inherit; font: inherit; display: flex; align-items: center; justify-content: center; }
input, select { font: inherit; color: inherit; margin: 0; font-feature-settings: inherit; }
svg { display: block; flex: none; overflow: visible; }
.defs { position: absolute; width: 0; height: 0; }
.app { min-height: 100vh; display: grid; grid-template-rows: 31px 44px 1fr 60px; grid-template-columns: minmax(0, 1fr); }

/* menu bar */
.menubar { background: #535353; border-bottom: 2px solid #3a3a3a; display: flex; align-items: center; }
.ps-badge { width: 18px; height: 17px; margin-left: 7px; border-radius: 3px; background: #001e36; color: #45a8f5; font-size: 10px; font-weight: 700; line-height: 17px; text-align: center; }
.menus { flex: 1; margin-left: 19px; display: grid; grid-template-columns: 73px 62px 71px 75px 62px 93px 83px 54px 64px 69px 91px 80px; color: #f0f0f0; }
.menus .kana { font-size: 13px; }
.winctl { display: grid; grid-template-columns: 34px 34px 59px; height: 24px; align-self: flex-start; margin-right: 4px; border: 1px solid #616161; border-top: 0; border-radius: 0 0 4px 4px; color: #b4b4b4; }
.winctl button + button { border-left: 1px solid #616161; }

/* options bar */
.options { background: #535353; border-bottom: 2px solid #3a3a3a; display: flex; align-items: center; padding: 0 10px 0 6px; }
.grip { width: 2px; height: 24px; background: repeating-linear-gradient(#3c3c3c 0 1px, #535353 1px 3px); }
.home { width: 60px; height: 32px; color: #a8a8a8; border-right: 1px solid #404040; padding-right: 3px; }
.toolpick { width: 61px; height: 32px; border-right: 1px solid #404040; gap: 8px; margin-right: 9px; padding-right: 3px; }
.field { display: flex; align-items: center; height: 28px; border: 1px solid #666; border-radius: 3px; background: #454545; padding: 0 4px 0 10px; }
.field select, .dd select { appearance: none; flex: 1; min-width: 0; border: 0; padding: 0; background: none; opacity: 1; }
.w-fill { width: 82px; }
.w-mode { width: 139px; }
.pattern { width: 51px; height: 36px; margin-left: 7px; border: 1px solid #5e5e5e; display: flex; align-items: center; justify-content: flex-end; padding-right: 3px; color: #666; background: linear-gradient(#484848, #484848) 35px 0 / 1px 100% no-repeat; }
.lbl { color: #d6d6d6; }
.l-mode { width: 50px; margin-left: 8px; }
.l-op { width: 75px; margin-left: 12px; }
.l-tol { width: 61px; margin-left: 11px; }
.num { display: flex; height: 24px; border: 1px solid #666; border-radius: 2px; background: #454545; }
.num input { width: 47px; border: 0; border-right: 1px solid #666; background: none; padding: 0 0 0 3px; font-size: 13px; }
.num button { width: 19px; }
.tol { width: 45px; height: 26px; border: 1px solid #6a6a6a; background: #424242; padding: 0 0 0 3px; font-size: 13px; }
.checks { display: flex; flex: 1; margin-left: 5px; border-left: 1px solid #404040; padding-left: 4px; height: 32px; align-items: center; }
.chk { display: flex; align-items: center; gap: 7px; color: #fff; font-size: 13px; }
.chk input { appearance: none; width: 14px; height: 14px; border: 1px solid #999; border-radius: 2px; background: #4a4a4a; }
.chk.off { color: #7c7c7c; }
.chk.off input { border-color: #626262; }
.chk input:checked { background: #6e6e6e; position: relative; }
.chk input:checked::after { content: ""; position: absolute; left: 3px; top: 0; width: 5px; height: 9px; border: solid #3c3c3c; border-width: 0 2px 2px 0; rotate: 40deg; }
.c1 { width: 125px; }
.c2 { width: 65px; }
.opt-right { display: flex; align-items: center; gap: 15px; }
.dim { color: #aaa; }
.faint { color: #757575; }

/* main split */
.main { display: grid; grid-template-columns: minmax(0, 1fr) 90px 360px; background: #3a3a3a; border-bottom: 1px solid #363636; }
.work { display: grid; grid-template-columns: minmax(0, 1fr); grid-template-rows: 37px 1fr 21px; padding: 0 2px 0 1px; min-width: 0; }
.tabbar { background: #424242; display: flex; }
.tabs { flex: 1; min-width: 0; display: flex; justify-content: flex-end; overflow: hidden; color: #a5a5a5; }
.tabs a { flex: none; width: 129px; display: flex; align-items: center; justify-content: center; gap: 9px; border-right: 1px solid #383838; }
.tabs a.on { width: 277px; background: #535353; color: #f2f2f2; border: 0; margin-top: 1px; gap: 12px; }
.tabmore { width: 47px; padding-left: 18px; }
.stage { display: grid; grid-template-columns: minmax(0, 1fr) 19px; background: #282828; }
.canvas { display: grid; place-items: center; }
.doc { width: 500px; height: 500px; background: #c32828; }
.vbar { background: #4a4a4a; display: flex; flex-direction: column; align-items: center; padding: 8px 0; color: #909090; }
.up { rotate: 180deg; }
.vbar .thumb { width: 14px; background: #696969; flex: 547; }
.above { flex: 331; }
.below { flex: 333; }
.status { background: #4a4a4a; display: flex; align-items: center; font-size: 13px; }
.zoomval { width: 60px; align-self: stretch; background: #424242; text-align: center; }
.info { width: 213px; text-align: center; background: #535353; color: #d2d2d2; }
.next { width: 17px; height: 20px; background: #535353; border-right: 1px solid #3a3a3a; }
.hbar { flex: 1; display: flex; align-items: center; padding: 0 24px 0 8px; color: #8f8f8f; }
.hbar .thumb { height: 14px; background: #696969; flex: 827; }
.before { flex: 467; }
.after { flex: 467; }
.lf { rotate: 90deg; }
.rt { rotate: -90deg; }

/* tool palette */
.tools { display: grid; grid-template-rows: 15px 1fr; gap: 1px; padding: 0 1px 0 2px; }
.dockhead { background: #424242; display: flex; justify-content: flex-end; align-items: center; padding-right: 7px; }
.toolbody { background: #535353; display: flex; flex-direction: column; align-items: center; padding-top: 5px; }
.hgrip { width: 26px; height: 5px; background: repeating-linear-gradient(90deg, #3c3c3c 0 1px, #535353 1px 3px); }
.toolgrid { margin-top: 10px; width: 84px; height: 585px; display: grid; grid-template-columns: 1fr 1fr; grid-template-rows: repeat(18, 1fr); color: #dcdcdc; }
.toolgrid button { position: relative; }
.toolgrid svg { width: 22px; height: 22px; }
.toolgrid .sel { background: #363636; border-radius: 2px; margin: 1px 2px; }
.toolgrid .sub::after { content: ""; position: absolute; right: 3px; bottom: 4px; border: 2px solid; border-color: transparent #c8c8c8 #c8c8c8 transparent; }
.colors { position: relative; width: 50px; height: 56px; margin-top: 9px; }
.colors > * { position: absolute; }
.fgc { left: 0; top: 0; width: 32px; height: 32px; background: #c22828; border: 2px solid #fff; outline: 1px solid #333; outline-offset: -1px; }
.bgc { left: 19px; top: 20px; width: 32px; height: 33px; background: #fff; border: 1px solid #333; }
.swap { left: 41px; top: 0; }
.dflt { left: 1px; top: 43px; }

/* right dock */
.dock { display: grid; grid-template-columns: minmax(0, 1fr); grid-template-rows: 15px 336px 339px 1fr; padding: 0 1px 0 2px; row-gap: 1px; }
.panel { background: #535353; min-width: 0; }
.ptabs { height: 35px; display: flex; background: #424242; color: #a3a3a3; font-size: 13px; align-items: stretch; border-bottom: 1px solid #383838; }
.ptabs a { display: flex; align-items: center; justify-content: center; border-right: 1px solid #383838; }
.ptabs a.on { background: #535353; color: #f0f0f0; margin-bottom: -1px; }
.ptabs .burger { margin: auto 5px auto auto; color: #c0c0c0; }
.t52 { width: 52px; } .t62 { width: 62px; } .t70 { width: 70px; } .t71 { width: 72px; } .t76 { width: 77px; } .t80 { width: 81px; } .t91 { width: 91px; }
.preview { height: 268px; display: grid; justify-items: center; padding: 7px 2px 0 0; border-bottom: 1px solid #3f3f3f; }
.thumbimg { width: 254px; height: 254px; background: #c32828; border: 2px solid #f85454; }
.zoomrow { display: flex; height: 32px; align-items: center; }
.zin { width: 71px; height: 31px; border: 0; background: #424242; padding: 0 0 0 4px; font-size: 13px; }
.m1 { margin-left: 9px; color: #ccc; }
.m2 { margin-left: 13px; }
.zoomrow input[type=range] { appearance: none; width: 182px; height: 20px; margin-left: 17px; background: linear-gradient(#7a7a7a, #7a7a7a) 0 6px / 100% 3px no-repeat; }
.zoomrow input[type=range]::-webkit-slider-thumb { appearance: none; width: 13px; height: 12px; margin-top: 9px; background: #f0f0f0; clip-path: polygon(50% 0, 100% 60%, 100% 100%, 0 100%, 0 60%); }
.swatches { display: flex; flex-direction: column; }
.ssearch { display: flex; align-items: center; gap: 4px; padding: 11px 10px 12px 11px; }
.ssearch input { flex: 1; min-width: 0; height: 28px; border: 1px solid #666; background: #454545; padding: 0 4px; }
.ssearch input::placeholder { color: #878787; }
.recent { display: flex; justify-content: space-between; padding: 0 12px 11px 10px; }
.recent i, .sgrid i { width: 20px; height: 20px; outline: 1px solid #444; }
.slist { flex: 1; display: grid; grid-template-columns: minmax(0, 1fr) 22px; background: #4a4a4a; border-bottom: 2px solid #3e3e3e; }
.grp { height: 36px; margin-bottom: 1px; background: #424242; display: flex; align-items: center; padding-left: 10px; font-size: 13px; }
.grp .lat { font-size: 14px; }
.grp .arr { margin-right: 6px; color: #bbb; }
.grp .r { rotate: -90deg; }
.grp span { margin-left: 12px; }
.sgrid { padding: 1px 16px 0 27px; height: 111px; display: grid; grid-template-columns: repeat(13, 20px); grid-template-rows: repeat(5, 20px); justify-content: space-between; align-content: space-between; }
.sbar { display: flex; flex-direction: column; align-items: center; padding: 9px 0 6px; color: #959595; }
.sbar .thumb { width: 14px; height: 25px; background: #696969; margin-top: 3px; }
.sbar .dn { margin-top: auto; }
.sfoot { height: 33px; display: flex; align-items: center; justify-content: flex-end; gap: 22px; padding: 0 36px 2px 0; }
.mut { color: #a0a0a0; }

/* layers */
.layers { display: grid; grid-template-columns: minmax(0, 1fr); grid-template-rows: 35px 42px 36px 38px 1fr 31px; color: #909090; }
.lrow { display: flex; align-items: center; padding: 0 6px 0 5px; border-bottom: 2px solid #454545; }
.lrow.lock { border: 0; padding-bottom: 2px; }
.filt { padding-top: 6px; }
.lrow label { margin-left: auto; margin-right: 12px; color: #8a8a8a; }
.dd { display: flex; align-items: center; height: 26px; border: 1px solid #606060; border-radius: 2px; padding: 0 4px 0 10px; color: #6c6c6c; }
.dd select { color: #8c8c8c; }
.kind { width: 149px; }
.kind .mag { margin-right: 6px; color: #a0a0a0; }
.blend { width: 195px; }
.ficons { display: flex; flex: 1; justify-content: space-between; align-items: center; padding: 0 31px 0 26px; color: #a8a8a8; }
.tog { width: 11px; height: 21px; border-radius: 6px; background: radial-gradient(circle at 5px 5px, #a8a8a8 5px, #484848 6px); }
.num.off { height: 22px; border-color: #606060; background: none; color: #7f7f7f; }
.num.off input { border-color: #606060; background: #4a4a4a; }
.locklbl { width: 53px; margin-left: 2px; color: #8a8a8a; font-size: 13px; }
.licons { display: flex; width: 124px; justify-content: space-between; align-items: center; color: #a8a8a8; }
.llist { background: #4a4a4a; border-bottom: 1px solid #3c3c3c; }
.layer { display: grid; grid-template-columns: 38px minmax(0, 1fr); height: 51px; padding-right: 19px; border-bottom: 1px solid #434343; color: #f0f0f0; }
.eye { display: grid; place-items: center; background: #535353; }
.lsel { background: #6b6b6b; display: flex; align-items: center; padding: 0 20px 0 5px; }
.lthumb { width: 40px; height: 40px; background: #c22828; border: 1px solid #333; }
.lname { flex: 1; margin-left: 12px; font-size: 13px; }
.lfoot { display: grid; grid-template-columns: repeat(7, 34px); justify-content: end; align-items: center; justify-items: center; padding-right: 25px; color: #a0a0a0; }
.fx { font: italic 17px/20px "Open Sans", sans-serif; }

/* taskbar */
.taskbar { display: grid; grid-template-columns: 1fr auto 1fr; align-items: center; background: linear-gradient(90deg, #114b6b 0, #134c69 7%, #2d5360 9%, #31575c 14%, #2b5162 22%, #29505f 50%, #2b5260 75%, #31565f 89%, #2c5563 91%, #154b69 93%, #0f486a 100%); }
.apps { display: grid; grid-template-columns: repeat(14, 55px); }
.apps button { height: 50px; position: relative; }
.run::after, .act::after { content: ""; position: absolute; left: 24px; bottom: 0; width: 7px; height: 4px; border-radius: 2px; background: #a0adb4; }
.apps .act { background: #3a5e6c; border: 1px solid #486a77; border-radius: 5px; margin: 0 3px; }
.act::after { left: 14px; width: 19px; background: #74cdf0; }
.ps-big { width: 28px; height: 27px; border-radius: 5px; background: #001e36; color: #3fa5f4; font: 700 15px/26px "Noto Sans", sans-serif; }
.glyph { fill: #fff; font: 700 13px "Noto Sans", sans-serif; text-anchor: middle; }
.tray { display: flex; align-items: center; justify-content: flex-end; padding-right: 25px; color: #fff; }
.tx { margin-left: 17px; }
.tb { margin-left: 30px; }
.tw { margin-left: 27px; }
.ts { margin-left: 9px; }
.clock { width: 96px; display: flex; flex-direction: column; align-items: flex-end; }
.badge { width: 20px; height: 20px; margin-left: 15px; border-radius: 50%; background: #76d1f5; color: #111; font-size: 13px; text-align: center; }

/* alert window */
.dialog { position: absolute; left: 1097px; top: 424px; width: 384px; color: #111; background: #fff; border-radius: 8px; overflow: hidden; box-shadow: 0 24px 48px #0009, 0 0 1px #777; font-size: 13px; line-height: 19px; }
.dialog header { display: flex; justify-content: space-between; height: 36px; align-items: center; padding: 0 14px 0 9px; }
.dbody { display: flex; gap: 10px; padding: 34px 28px 32px 28px; }
.dtext { position: relative; }
.dialog p { margin: 0 0 1px; }
.dialog ul { margin: 0; padding: 0; list-style: none; }
.dialog li { display: grid; grid-template-columns: 90px auto; }
.mask { position: absolute; left: 61px; top: 24px; width: 29px; bottom: 0; background: #000; }
.dialog footer { background: #f0f0f0; height: 62px; display: flex; align-items: center; justify-content: flex-end; padding-right: 23px; }
.dialog footer button { width: 98px; height: 31px; border: 1px solid #0067c0; border-radius: 4px; background: #fdfdfd; }
```
